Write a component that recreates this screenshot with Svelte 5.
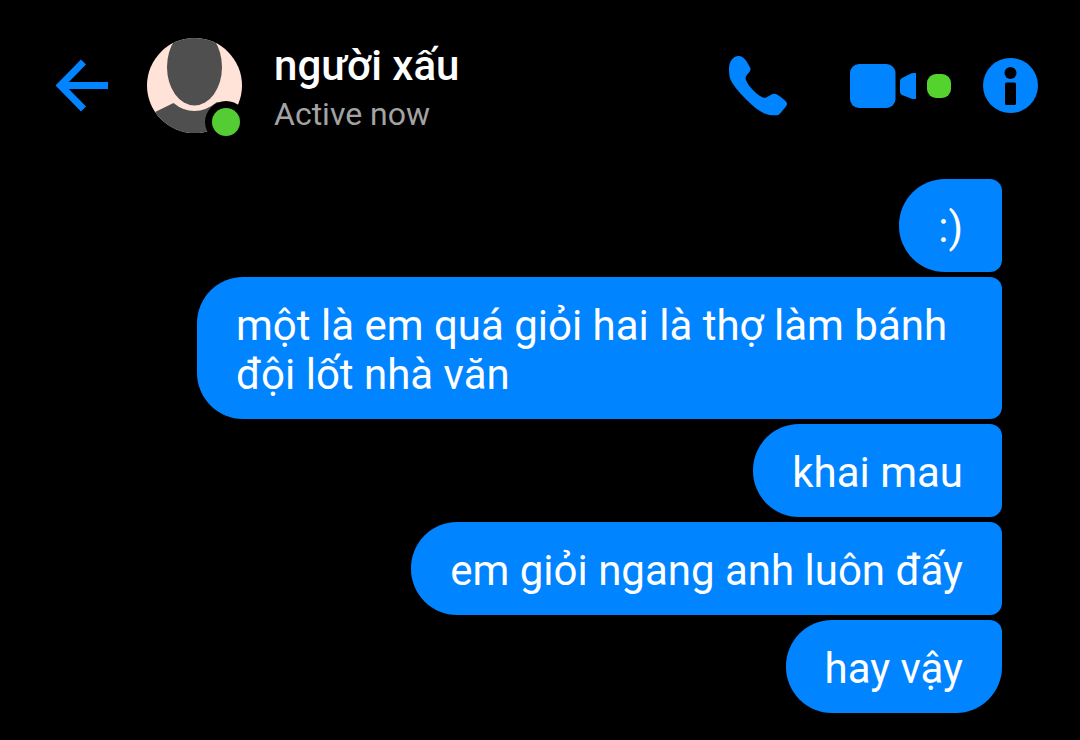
<script lang="ts">
    const contact = { name: 'người xấu', status: 'Active now' };

    const messages: string[] = [
        ':)',
        'một là em quá giỏi hai là thợ làm bánh đội lốt nhà văn',
        'khai mau',
        'em giỏi ngang anh luôn đấy',
        'hay vậy'
    ];
</script>

<div class="chat">
    <header class="chat-header">
        <button class="icon-button" aria-label="Back">
            <svg width="52" height="53" viewBox="0 0 52 53">
                <path d="M27.500 3 L4.500 26.500 L27.500 50 M4.500 26.500 H52" fill="none" stroke="currentColor" stroke-width="7" />
            </svg>
        </button>

        <svg class="avatar" width="95" height="95" viewBox="0 0 95 95" aria-hidden="true">
            <defs>
                <clipPath id="avatar-clip">
                    <circle cx="47.5" cy="47.5" r="47.5" />
                </clipPath>
            </defs>
            <g clip-path="url(#avatar-clip)">
                <rect width="95" height="95" fill="#ffe3d8" />
                <ellipse cx="47.5" cy="29" rx="27.5" ry="38.5" fill="#4f4f4f" />
                <path d="M0 78 L26.500 65 Q36 73 47.500 73 Q59 73 70 64 L95 78 V95 H0 Z" fill="#4f4f4f" />
            </g>
            <circle cx="79" cy="84" r="21" fill="#000" />
            <circle cx="79" cy="84" r="14" fill="#54cc33" />
        </svg>

        <div class="contact">
            <h1 class="contact-name">{contact.name}</h1>
            <p class="contact-status">{contact.status}</p>
        </div>

        <div class="actions">
            <button class="icon-button" aria-label="Voice call">
                <svg width="60" height="61" viewBox="0 0 60 61">
                    <path
                        d="M1 14 C1 6.500 5 1 10.500 1 C13.500 1 16 3 18 5.500 C20 8.500 21.500 11 22.300 13 C22.800 14.500 22.300 15.800 21 17.500 L18.800 20 C17.500 21.800 17.300 23.500 18.200 25.500 C21 32 28 39 34.500 42.300 C36.500 43.200 38 43 40 41.500 L43 39.700 C45.500 38.300 47.500 38.500 49.500 39.700 C53 42 56 44.500 58 46.500 C59.300 48 59.300 49.500 58.300 51 L53 57.500 C51.500 59.500 50 60.300 47.500 60.300 H44 C37 60 30 55.500 23.500 49.500 C15.500 42.500 8.500 34.500 4 27.500 C1.500 23.500 1 19 1 14 Z"
                        fill="currentColor"
                    />
                </svg>
            </button>

            <button class="icon-button video" aria-label="Video call">
                <svg width="66" height="44" viewBox="0 0 66 44">
                    <rect width="45.500" height="44" rx="9" fill="currentColor" />
                    <path d="M50 17 Q50 15 52 14 L61 9.500 Q62 9 63.500 9 H66 V35 H63.500 Q62 35 61 34.500 L52 31 Q50 30 50 28 Z" fill="currentColor" />
                </svg>
                <span class="online-dot"></span>
            </button>

            <button class="icon-button" aria-label="Conversation details">
                <svg width="55" height="55" viewBox="0 0 55 55">
                    <circle cx="27.500" cy="27.500" r="27.500" fill="currentColor" />
                    <circle cx="27.500" cy="15" r="6" fill="#000" />
                    <rect x="22" y="24.500" width="11" height="22.500" rx="1.500" fill="#000" />
                </svg>
            </button>
        </div>
    </header>

    <main class="messages">
        {#each messages as message}
            <p class="bubble">{message}</p>
        {/each}
    </main>
</div>

<style>
    :global(body) {
        margin: 0;
        background: #000;
    }

    .chat {
        font-family: Roboto, sans-serif;
        color: #fff;
    }

    .chat-header {
        display: flex;
        align-items: center;
        padding: 32px 42px 0 56px;
    }

    .icon-button {
        display: flex;
        align-items: center;
        padding: 0;
        border: none;
        background: none;
        color: #0084ff;
        cursor: pointer;
    }

    svg {
        display: block;
        flex: none;
    }

    .avatar {
        margin-left: 39px;
        overflow: visible;
    }

    .contact {
        flex: 1;
        margin-left: 32px;
        padding-top: 9px;
    }

    .contact-name {
        margin: 0;
        font-size: 42px;
        font-weight: 500;
        line-height: 49px;
    }

    .contact-status {
        margin: 0;
        font-size: 32px;
        line-height: 49px;
        color: #a3a3a3;
    }

    .actions {
        display: flex;
        align-items: center;
    }

    .video {
        gap: 11px;
        margin: 0 32px 0 62px;
    }

    .online-dot {
        width: 24px;
        height: 24px;
        border-radius: 9px;
        background: #54d22d;
    }

    .messages {
        display: flex;
        flex-direction: column;
        align-items: flex-end;
        gap: 5px;
        padding: 40px 78px 27px;
    }

    .bubble {
        box-sizing: border-box;
        max-width: 805px;
        margin: 0;
        padding: 24px 39px 20px;
        border-radius: 46px 12px 12px 46px;
        background: #0084ff;
        font-size: 42px;
        line-height: 49px;
    }

    .bubble:last-child {
        border-bottom-right-radius: 46px;
    }
</style>
